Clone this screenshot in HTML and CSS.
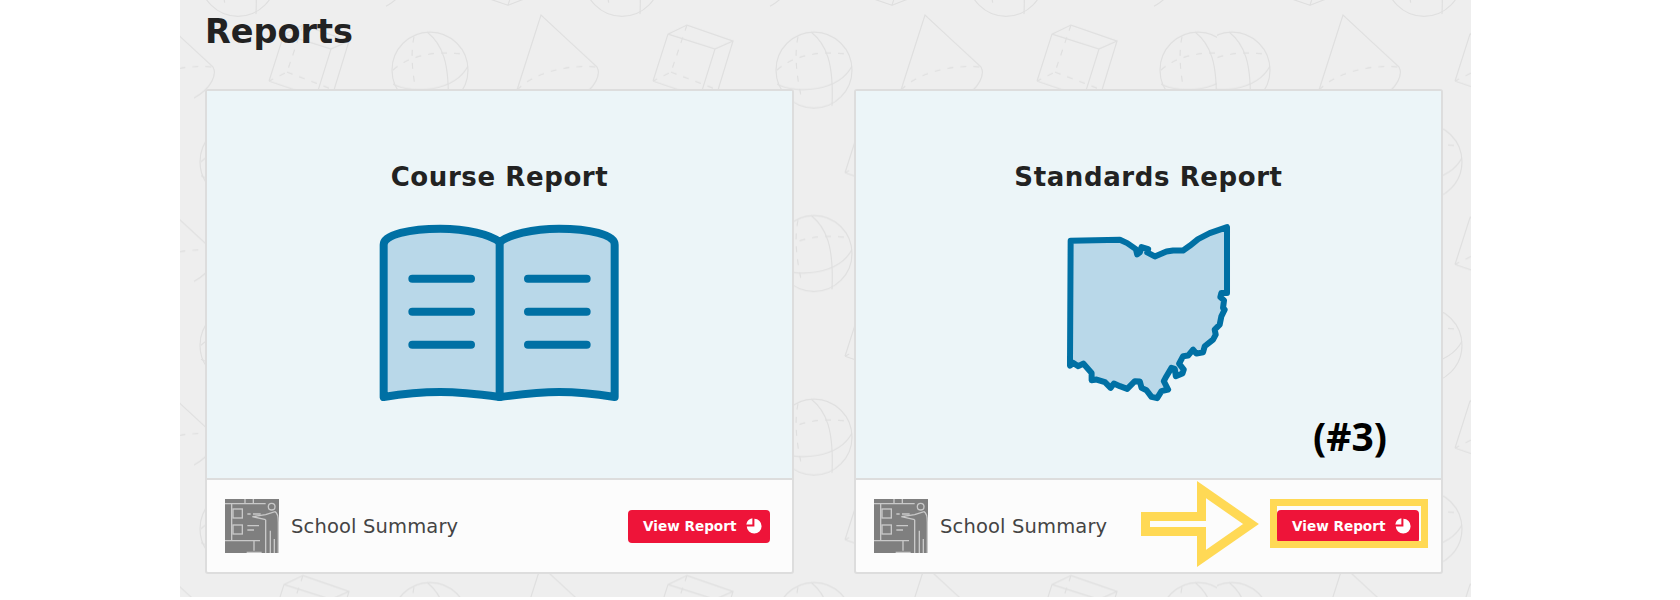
FILE: index.html
```html
<!DOCTYPE html>
<html lang="en">
<head>
  <meta charset="UTF-8">
  <meta name="viewport" content="width=device-width, initial-scale=1.0">
  <title>Reports</title>
  <link rel="stylesheet" href="styles.css">
</head>
<body>
<svg width="0" height="0" class="defs">
  <defs>
    <g id="shapes">
      <!-- sphere -->
      <circle cx="250" cy="70" r="38"/>
      <path d="M247 32C262 44 270 62 268 106"/>
      <path d="M213 84C232 94 274 92 288 66"/>
      <path class="dash" d="M213 70C226 58 250 50 282 54"/>
      <path class="dash" d="M234 37C231 50 231 70 238 100"/>
      <!-- cone -->
      <path d="M337 90L361 15L417 67C421 74 416 88 398 98"/>
      <path class="dash" d="M337 90C352 74 385 64 417 67"/>
      <!-- box -->
      <path d="M89 81L104 34L123 25L169 41L151 49L104 34M151 49L136 97L89 81M169 41L154 90L136 97"/>
      <path class="dash" d="M123 25L107 72L89 81M107 72L154 90"/>
    </g>
    <pattern id="tile" width="384" height="183.5" patternUnits="userSpaceOnUse">
      <use href="#shapes"/>
      <use href="#shapes" x="-384"/>
      <use href="#shapes" x="192" y="91.75"/>
      <use href="#shapes" x="-192" y="91.75"/>
      <use href="#shapes" x="192" y="-91.75"/>
      <use href="#shapes" x="-192" y="-91.75"/>
    </pattern>
    <pattern id="tile-shifted" href="#tile" patternTransform="translate(34 0)"/>
    <symbol id="teacher" viewBox="0 0 162 162">
      <rect width="162" height="162" fill="#7f7f7f"/>
      <g fill="none" stroke="#c9c9c9" stroke-width="4">
        <path d="M0 14H122M60 0V14M85 0V14M20 14V125M0 125H105M87 125V155M65 160H110"/>
        <rect x="24" y="30" width="28" height="27"/>
        <rect x="24" y="78" width="28" height="27"/>
        <path d="M67 45H77M84 45H107M67 80H102M67 93H87"/>
        <circle cx="140" cy="23" r="10"/>
        <path d="M82 53L122 47L150 38C158 42 160 50 160 70V162M122 62L82 53M122 62V162M136 95V162M148 120V162"/>
      </g>
    </symbol>
    <symbol id="pie" viewBox="0 0 16 16">
      <path fill="#fff" d="M6.400 0.300A7.600 7.600 0 0 0 0.300 6.400H6.400Z"/>
      <path fill="#fff" d="M8.400 0.800A7.400 7.400 0 1 1 0.800 8.400H8.400Z"/>
    </symbol>
  </defs>
</svg>

<div class="panel">
  <svg class="panel-bg" width="100%" height="100%">
    <rect width="1037" height="597" fill="url(#tile)"/>
    <rect x="1037" width="254" height="597" fill="url(#tile-shifted)"/>
  </svg>

  <h2 class="page-title">Reports</h2>

  <div class="cards">
    <div class="card">
      <div class="card-head">
        <h3>Course Report</h3>
        <svg class="book" viewBox="50 40 735 540">
          <path class="art" d="M70 105C70 75 150 57 240 57C320 57 390 75 418 97C446 75 516 57 596 57C686 57 763 75 763 105V562C700 552 650 547 596 547C530 547 470 555 418 562C366 555 306 547 240 547C186 547 130 552 70 562Z"/>
          <path class="art-line" d="M418 97V562M156 207H332M156 306H332M156 405H332M503 207H679M503 306H679M503 405H679"/>
        </svg>
      </div>
      <div class="card-foot">
        <svg class="foot-icon"><use href="#teacher"/></svg>
        <span class="foot-label">School Summary</span>
        <a class="btn" href="#">View Report <svg class="btn-icon"><use href="#pie"/></svg></a>
      </div>
    </div>

    <div class="card">
      <div class="card-head">
        <h3>Standards Report</h3>
        <svg class="ohio" viewBox="75 40 505 540">
          <path class="art thin" d="M92 93L240 90L262 100L288 118L292 134L300 128L305 112L325 118L322 128L345 140L380 125L400 122L430 122L450 108L475 88L510 70L562 52V250L545 250L542 262L553 272L550 295L555 300L545 320L540 345L525 360L528 375L520 390L495 410L490 428L470 432L460 420L445 438L430 440L418 462L432 480L428 492L408 500L405 478L395 475L380 500L372 515L385 540L365 545L352 566L335 562L320 542L305 535L300 516L285 515L262 538L240 530L222 522L212 535L195 518L170 510L155 512L155 490L130 462L115 470L100 460L90 468Z"/>
        </svg>
      </div>
      <div class="card-foot">
        <svg class="foot-icon"><use href="#teacher"/></svg>
        <span class="foot-label">School Summary</span>
        <a class="btn" href="#">View Report <svg class="btn-icon"><use href="#pie"/></svg></a>
      </div>

      <!-- annotations drawn over the screenshot -->
      <div class="note">(#3)</div>
      <svg class="note-arrow" viewBox="0 0 118 86">
        <path d="M4.500 35.500H60.500V8.600L110 43L60.500 77.400V50.500H4.500Z"/>
      </svg>
      <div class="note-box"></div>
    </div>
  </div>
</div>
</body>
</html>
```

FILE: styles.css
```css
* {
  margin: 0;
  padding: 0;
  box-sizing: border-box;
}

body {
  background: #fff;
  font-family: "DejaVu Sans", sans-serif;
  color: #222;
}

.defs {
  position: absolute;
}

.panel {
  position: relative;
  width: 1291px;
  height: 597px;
  margin-left: 180px;
  padding: 9px 28px 0 25px;
  background: #eee;
  overflow: hidden;
}

.panel-bg {
  position: absolute;
  top: 0;
  left: 0;
}

#shapes {
  fill: none;
  stroke: #dfdfdf;
  stroke-width: 1.2;
}

#shapes .dash {
  stroke-dasharray: 6 7;
}

.page-title {
  position: relative;
  height: 80px;
  padding-top: 1px;
  font-size: 33.500px;
  line-height: 44px;
  font-weight: bold;
}

.cards {
  position: relative;
  display: flex;
  gap: 60px;
}

.card {
  position: relative;
  width: 589px;
  height: 485px;
  display: flex;
  flex-direction: column;
  border: 2px solid #ddd;
  border-radius: 3px;
  background: #fcfcfc;
}

.card-head {
  height: 389px;
  padding-top: 71px;
  display: flex;
  flex-direction: column;
  align-items: center;
  background: #ecf5f8;
  border-bottom: 2px solid #ddd;
}

.card-head h3 {
  font-size: 26px;
  line-height: 30px;
  letter-spacing: 0.6px;
  font-weight: bold;
  margin-bottom: 31px;
}

.book {
  width: 245px;
  height: 180px;
}

.ohio {
  width: 168px;
  height: 180px;
}

.art {
  fill: #b9d8e9;
  stroke: #0070a4;
  stroke-width: 24;
  stroke-linejoin: round;
}

.art.thin {
  stroke-width: 18;
}

.art-line {
  fill: none;
  stroke: #0070a4;
  stroke-width: 24;
  stroke-linecap: round;
}

.card-foot {
  flex: 1;
  display: flex;
  align-items: center;
  padding: 0 22px 0 18px;
}

.foot-icon {
  width: 54px;
  height: 54px;
  margin-right: 12px;
}

.foot-label {
  font-size: 19.500px;
  letter-spacing: 0.15px;
  color: #444;
}

.btn {
  margin-left: auto;
  width: 142px;
  height: 33px;
  padding: 0 8px 0 15px;
  display: flex;
  align-items: center;
  justify-content: space-between;
  background: #ee1439;
  border-radius: 4px;
  color: #fff;
  font-size: 13.600px;
  font-weight: bold;
  text-decoration: none;
}

.btn-icon {
  width: 16px;
  height: 16px;
}

.note {
  position: absolute;
  left: 457px;
  top: 320px;
  font-family: "Open Sans", sans-serif;
  font-size: 39px;
  line-height: 50px;
  font-weight: bold;
  color: #000;
}

.note-arrow {
  position: absolute;
  left: 285px;
  top: 390px;
  width: 118px;
  height: 86px;
  overflow: visible;
  fill: #fcfcfc;
  stroke: #ffd955;
  stroke-width: 9;
}

.note-box {
  position: absolute;
  left: 414px;
  top: 408px;
  width: 158px;
  height: 49px;
  border: 7px solid #ffd955;
}
```
